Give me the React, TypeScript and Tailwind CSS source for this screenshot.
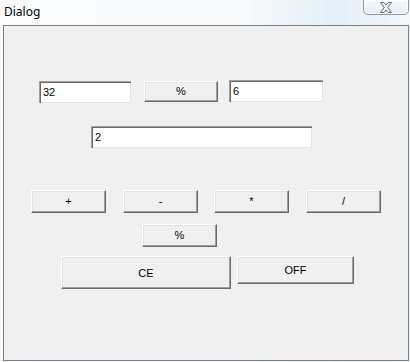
const font = { fontFamily: '"Liberation Sans", Arial, sans-serif' };

function Edit({ value, className }: { value: string; className: string }) {
    return (
        <div
            className={`h-[22px] bg-white border-t border-l border-[#a0a0a0] border-b-white border-r-white shadow-[inset_1px_1px_0_#696969,inset_-1px_-1px_0_#e3e3e3] pl-[3px] pt-[4px] text-[11px] leading-[13px] text-black ${className}`}
        >
            {value}
        </div>
    );
}

function Btn({ label, className }: { label: string; className: string }) {
    return (
        <div
            className={`flex items-center justify-center bg-[#f0f0f0] border-t border-l border-white border-b border-r border-b-[#696969] border-r-[#696969] shadow-[inset_-1px_-1px_0_#a0a0a0,inset_1px_1px_0_#e3e3e3] text-[11px] text-black ${className}`}
        >
            {label}
        </div>
    );
}

export default function App() {
    return (
        <div className="w-[410px] h-[362px] overflow-hidden bg-[linear-gradient(90deg,#fafbfc_0%,#f7f9fb_60%,#e3eff6_82%,#f3f7fa_100%)] flex flex-col" style={font}>
            {/* title bar */}
            <div className="h-[25px] flex items-start justify-between">
                <span className="pl-[4px] pt-[5px] text-[12px] leading-[14px] text-black" style={{ fontFamily: '"Noto Sans", "Open Sans", sans-serif' }}>
                    Dialog
                </span>
                <div className="mr-[1px] w-[46px] h-[16px] -mt-[1px] rounded-b-[5px] border border-[#8c97a5] bg-[linear-gradient(180deg,#f8fafc,#e4edf4)] shadow-[inset_0_0_0_1px_#ffffff] flex items-center justify-center">
                    <svg width="14" height="11" viewBox="0 0 14 11">
                        <path d="M1.5 0.5h3.5l2 2.6 2-2.6h3.5l-3.7 5 3.7 5h-3.5l-2-2.6-2 2.6h-3.5l3.7-5z" fill="#f4f6f8" stroke="#5f6c7b" strokeWidth="1" />
                    </svg>
                </div>
            </div>

            {/* client area */}
            <div className="ml-[3px] w-[406px] h-[336px] border border-[#7a7f86] bg-[#f0f0f0] flex flex-col">
                <div className="flex items-start mt-[54px]">
                    <Edit value="32" className="ml-[35px] w-[92px] mt-[1px]" />
                    <Btn label="%" className="ml-[13px] w-[74px] h-[21px] mt-[1px]" />
                    <Edit value="6" className="ml-[11px] w-[94px]" />
                </div>
                <div className="flex mt-[23px]">
                    <Edit value="2" className="ml-[87px] w-[221px]" />
                </div>
                <div className="flex mt-[42px]">
                    <Btn label="+" className="ml-[27px] w-[75px] h-[23px]" />
                    <Btn label="-" className="ml-[17px] w-[75px] h-[23px]" />
                    <Btn label="*" className="ml-[16px] w-[75px] h-[23px]" />
                    <Btn label="/" className="ml-[17px] w-[75px] h-[23px]" />
                </div>
                <div className="flex mt-[11px]">
                    <Btn label="%" className="ml-[138px] w-[75px] h-[23px]" />
                </div>
                <div className="flex items-start mt-[9px]">
                    <Btn label="CE" className="ml-[57px] w-[170px] h-[33px] pt-[2px]" />
                    <Btn label="OFF" className="ml-[6px] w-[117px] h-[28px]" />
                </div>
            </div>
        </div>
    );
}
